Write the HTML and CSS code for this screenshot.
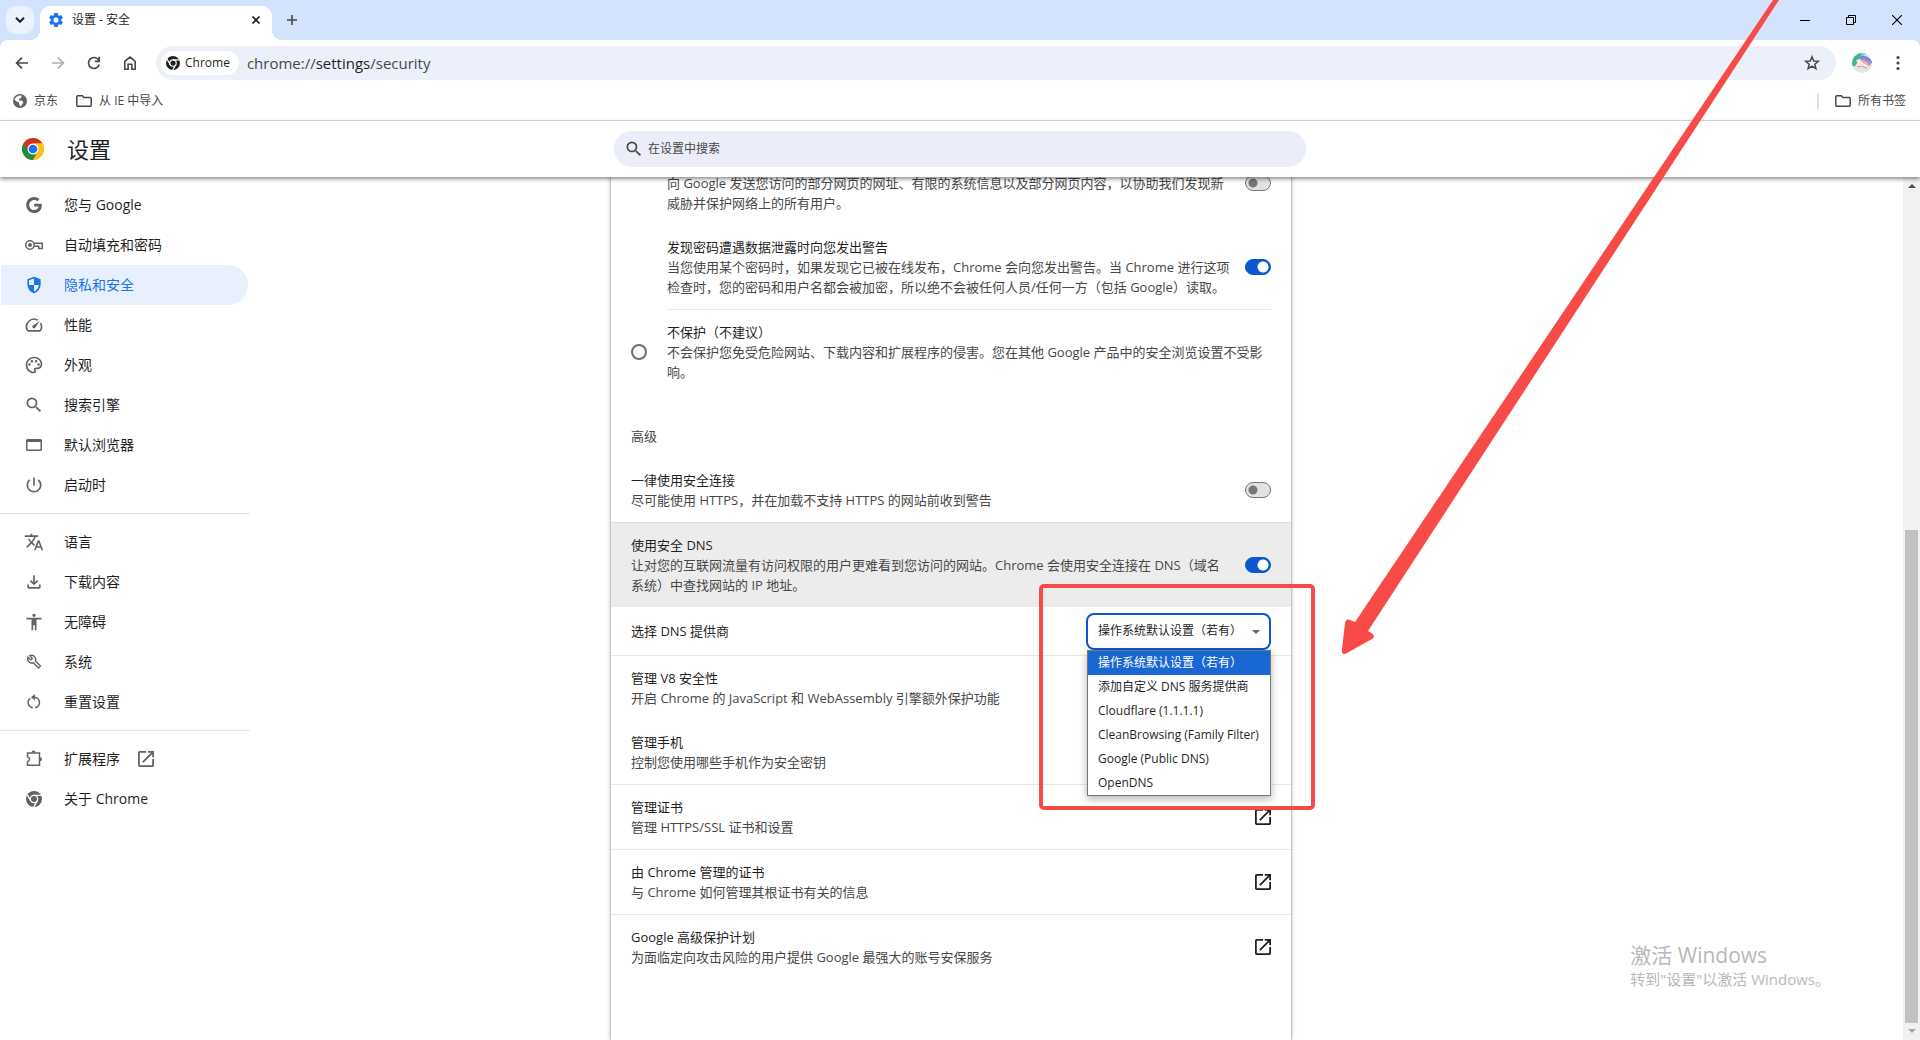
FILE: index.html
```html
<!DOCTYPE html>
<html lang="zh-CN">
<head>
<meta charset="utf-8">
<title>设置 - 安全</title>
<link rel="stylesheet" href="styles.css">
</head>
<body>
<svg class="defs" aria-hidden="true">
  <symbol id="i-open" viewBox="3 3 18 18"><path d="M19 19H5V5h7V3H5a2 2 0 0 0-2 2v14a2 2 0 0 0 2 2h14c1.100 0 2-.9 2-2v-7h-2v7zM14 3v2h3.590l-9.830 9.830 1.410 1.410L19 6.410V10h2V3h-7z"/></symbol>
  <symbol id="i-chrome" viewBox="0 0 24 24"><circle cx="12" cy="12" r="12"/><g fill="none" stroke="#fff" stroke-width="2"><circle cx="12" cy="12" r="5.500"/><path d="M12 6.500h11M7.200 14.800L1.800 5.400M16.800 14.800l-5.300 9.200"/></g></symbol>
  <symbol id="i-folder" viewBox="0 0 16 12"><path d="M1.700 .8h4.600l1.600 1.800h6.400c.5 0 .9.400.9.900v6.800c0 .5-.4.900-.9.900H1.700c-.5 0-.9-.4-.9-.9V1.700c0-.5.4-.9.9-.9z" fill="none" stroke="currentColor" stroke-width="1.500"/></symbol>
  <symbol id="i-search" viewBox="0 0 24 24"><path d="M15.500 14h-.79l-.28-.27A6.470 6.470 0 0 0 16 9.500 6.500 6.500 0 1 0 9.500 16c1.610 0 3.090-.59 4.230-1.570l.27.28v.79l5 4.990L20.490 19l-4.990-5zm-6 0C7.010 14 5 11.990 5 9.500S7.010 5 9.500 5 14 7.010 14 9.500 11.990 14 9.500 14z"/></symbol>
</svg>

<div class="window">
  <div class="tabstrip">
    <button class="tab-search" aria-label="搜索标签页"><svg width="10" height="6" viewBox="0 0 10 6"><path d="M1 .8l4 4 4-4" fill="none" stroke="currentColor" stroke-width="2"/></svg></button>
    <div class="tab">
      <svg class="gear" width="16" height="16" viewBox="1 1 22 22"><path d="M19.140 12.940c.04-.3.060-.61.060-.94 0-.32-.02-.64-.07-.94l2.030-1.580a.49.490 0 0 0 .12-.61l-1.920-3.320a.488.488 0 0 0-.59-.22l-2.390.96c-.5-.38-1.030-.7-1.620-.94l-.36-2.540a.484.484 0 0 0-.48-.41h-3.840c-.24 0-.43.170-.47.410l-.36 2.540c-.59.240-1.130.570-1.620.940l-2.390-.96c-.22-.08-.47 0-.59.220L2.740 8.870c-.12.210-.08.470.120.610l2.030 1.580c-.05.300-.09.630-.09.940s.02.640.070.940l-2.030 1.580a.49.490 0 0 0-.12.610l1.920 3.320c.12.220.370.290.590.220l2.390-.96c.5.380 1.030.700 1.620.940l.36 2.540c.05.240.240.410.480.410h3.840c.24 0 .44-.17.470-.41l.36-2.540c.59-.24 1.130-.56 1.620-.94l2.390.96c.22.080.470 0 .59-.22l1.920-3.320c.12-.22.070-.47-.12-.61l-2.010-1.580zM12 15.600A3.600 3.600 0 1 1 12 8.400a3.600 3.600 0 0 1 0 7.200z"/></svg>
      <span class="tab-title">设置 - 安全</span>
      <button class="tab-close" aria-label="关闭标签页"><svg width="8" height="8" viewBox="0 0 8 8"><path d="M.5.5l7 7M7.500.5l-7 7" stroke="currentColor" stroke-width="1.600"/></svg></button>
    </div>
    <button class="new-tab" aria-label="新标签页"><svg width="10" height="10" viewBox="0 0 10 10"><path d="M5 0v10M0 5h10" stroke="currentColor" stroke-width="1.600"/></svg></button>
    <div class="win-controls">
      <button aria-label="最小化"><svg width="10" height="10" viewBox="0 0 10 10"><path d="M0 5.500h10" stroke="currentColor"/></svg></button>
      <button aria-label="还原"><svg width="10" height="10" viewBox="0 0 10 10"><path d="M.5 2.500h7v7h-7zM2.500 2.500v-2h7v7h-2" fill="none" stroke="currentColor"/></svg></button>
      <button aria-label="关闭"><svg width="10" height="10" viewBox="0 0 10 10"><path d="M0 0l10 10M10 0L0 10" stroke="currentColor" stroke-width="1.200"/></svg></button>
    </div>
  </div>

  <div class="toolbar">
    <button class="tool" aria-label="后退"><svg width="18" height="18" viewBox="0 0 18 18"><path d="M15 9H4M9 3.600L3.600 9 9 14.400" fill="none" stroke="currentColor" stroke-width="1.700"/></svg></button>
    <button class="tool" aria-label="前进" disabled><svg width="18" height="18" viewBox="0 0 18 18"><path d="M3 9h11M9 3.600L14.400 9 9 14.400" fill="none" stroke="currentColor" stroke-width="1.700"/></svg></button>
    <button class="tool" aria-label="重新加载"><svg width="18" height="18" viewBox="0 0 18 18"><path d="M14.300 10.500A5.500 5.500 0 1 1 13.500 5.800L14 6.500" fill="none" stroke="currentColor" stroke-width="1.700"/><path d="M14.200 2.800v4.500H9.800" fill="none" stroke="currentColor" stroke-width="1.700"/></svg></button>
    <button class="tool" aria-label="主页"><svg width="18" height="18" viewBox="0 0 18 18"><path d="M3.800 15.200V7.300L9 3.100l5.200 4.200v7.900h-3.300v-5H7.100v5z" fill="none" stroke="currentColor" stroke-width="1.600"/></svg></button>
    <div class="omnibox">
      <button class="chip"><svg width="14" height="14"><use href="#i-chrome"/></svg>Chrome</button>
      <span class="url">chrome://<b>settings</b>/security</span>
      <button class="star" aria-label="为此标签页添加书签"><svg width="18" height="18" viewBox="0 0 18 18"><path d="M9 2.800l1.700 4.200 4.600.3-3.500 2.900 1.100 4.400L9 12.200l-3.900 2.400 1.100-4.400-3.500-2.900 4.600-.3z" fill="none" stroke="currentColor" stroke-width="1.500"/></svg></button>
    </div>
    <button class="avatar" aria-label="个人资料"><svg width="20" height="20" viewBox="0 0 20 20"><clipPath id="av"><circle cx="10" cy="10" r="10"/></clipPath><g clip-path="url(#av)"><path fill="#e4e4e4" d="M0 0h20v20H0z"/><path fill="#3fb593" d="M0 0h12L8 6 3 13H0z"/><path fill="#7ed3cc" d="M10 0h5L6 8z"/><g fill="none" stroke-width="2.400"><path d="M8 5c3-2 8-1 12 5" stroke="#6f86dd"/><path d="M8 7c4-2 7 0 10 5" stroke="#9c85d6"/><path d="M9 9c3-1 6 1 8 4" stroke="#e8a9bd"/></g><path fill="#f4ead6" d="M4 7l4-1 3 4 5 3-1 2-6-1-5 1 2-4z"/><path fill="none" stroke="#a9a9a9" d="M5 14l4-1 6 2"/></g></svg></button>
    <button class="menu" aria-label="菜单"><svg width="4" height="16" viewBox="0 0 4 16"><circle cx="2" cy="2.500" r="1.600"/><circle cx="2" cy="8" r="1.600"/><circle cx="2" cy="13.500" r="1.600"/></svg></button>
  </div>

  <nav class="bookmarks" aria-label="书签">
    <a href="#jd"><svg width="14" height="14" viewBox="0 0 14 14"><circle cx="7" cy="7" r="7" fill="#5f6368"/><path d="M1.300 5.500l2.700 2.300 2 .4v2l1.500 2.400L9.500 10l.8-2-1.800-1.400H6V5l2.200-1.200L8.600 1.500 5 1.700 3 3.200z" fill="#fff"/></svg>京东</a>
    <a href="#ie"><svg width="16" height="12"><use href="#i-folder"/></svg>从 IE 中导入</a>
    <a class="all" href="#all"><svg width="16" height="12"><use href="#i-folder"/></svg>所有书签</a>
  </nav>

  <header class="header">
    <div class="brand">
      <svg width="22" height="22" viewBox="0 0 48 48"><circle cx="24" cy="24" r="24" fill="#fbc116"/><path d="M24 24L3.200 12A24 24 0 0 0 24 48l10.400-18z" fill="#1e8e3e"/><path d="M24 12h20.800A24 24 0 0 0 3.200 12l10.400 18z" fill="#d93025"/><path d="M24 48a24 24 0 0 0 20.800-36H24l10.400 18z" fill="#fbc116"/><circle cx="24" cy="24" r="12" fill="#fff"/><circle cx="24" cy="24" r="9.500" fill="#1a73e8"/></svg>
      <h1>设置</h1>
    </div>
    <label class="search"><svg width="20" height="20"><use href="#i-search"/></svg><input type="search" placeholder="在设置中搜索" aria-label="在设置中搜索"></label>
  </header>

  <div class="content">
    <nav class="sidebar" aria-label="设置">
      <a href="#people"><svg width="20" height="20" viewBox="-3 -3 30 30"><path d="M12.240 10.285V14.400h6.806c-.275 1.765-2.056 5.174-6.806 5.174-4.095 0-7.439-3.389-7.439-7.574s3.345-7.574 7.439-7.574c2.330 0 3.891.989 4.785 1.849l3.254-3.138C18.189 1.186 15.479 0 12.240 0c-6.635 0-12 5.365-12 12s5.365 12 12 12c6.926 0 11.520-4.869 11.520-11.726 0-.788-.085-1.390-.189-1.989H12.240z"/></svg><span>您与 <b>Google</b></span></a>
      <a href="#autofill"><svg width="20" height="20" viewBox="0 0 20 20"><g fill="none" stroke="currentColor" stroke-width="1.500"><circle cx="6" cy="10" r="4.200"/><path d="M10 8.200h8.300v5.200h-3.500v-2.200H10"/></g><circle cx="6" cy="10" r="2"/></svg>自动填充和密码</a>
      <a class="selected" href="#privacy"><svg width="20" height="20" viewBox="0 -960 960 960"><path d="M480-80q-139-35-229.500-159.500T160-516v-244l320-120 320 120v244q0 152-90.500 276.500T480-80Zm0-84q97-30 162-118.500T718-480H480v-315l-240 90v207q0 7 2 18h238v316Z"/></svg>隐私和安全</a>
      <a href="#performance"><svg width="20" height="20" viewBox="0 0 24 24"><path d="M20.380 8.570l-1.230 1.850a8 8 0 0 1-.22 7.580H5.070A8 8 0 0 1 15.580 6.850l1.850-1.230A10 10 0 0 0 3.350 19a2 2 0 0 0 1.720 1h13.850a2 2 0 0 0 1.740-1 10 10 0 0 0-.27-10.440zm-9.790 6.840a2 2 0 0 0 2.830 0l5.660-8.490-8.490 5.660a2 2 0 0 0 0 2.830z"/></svg>性能</a>
      <a href="#appearance"><svg width="20" height="20" viewBox="0 0 24 24"><path d="M12 22C6.490 22 2 17.510 2 12S6.490 2 12 2s10 4.040 10 9c0 3.310-2.690 6-6 6h-1.770c-.28 0-.5.220-.5.500 0 .12.050.230.130.330.410.470.640 1.060.640 1.670A2.500 2.500 0 0 1 12 22zm0-18c-4.410 0-8 3.590-8 8s3.590 8 8 8c.28 0 .5-.22.500-.5a.540.540 0 0 0-.14-.35c-.41-.46-.63-1.050-.63-1.650a2.500 2.500 0 0 1 2.500-2.500H16c2.210 0 4-1.790 4-4 0-3.860-3.590-7-8-7z"/><circle cx="6.500" cy="11.500" r="1.500"/><circle cx="9.500" cy="7.500" r="1.500"/><circle cx="14.500" cy="7.500" r="1.500"/><circle cx="17.500" cy="11.500" r="1.500"/></svg>外观</a>
      <a href="#search"><svg width="20" height="20"><use href="#i-search"/></svg>搜索引擎</a>
      <a href="#default"><svg width="20" height="20" viewBox="0 0 20 20"><path d="M3.500 4h13A1.500 1.500 0 0 1 18 5.500v9a1.500 1.500 0 0 1-1.500 1.500h-13A1.500 1.500 0 0 1 2 14.500v-9A1.500 1.500 0 0 1 3.500 4zm0 3v7.500h13V7z" fill-rule="evenodd"/></svg>默认浏览器</a>
      <a href="#startup"><svg width="20" height="20" viewBox="0 0 24 24"><path d="M13 3h-2v10h2V3zm4.830 2.170l-1.420 1.420A6.920 6.920 0 0 1 19 12a7 7 0 1 1-11.420-5.420L6.170 5.170A8.930 8.930 0 0 0 3 12a9 9 0 1 0 14.830-6.830z"/></svg>启动时</a>
      <hr>
      <a href="#languages"><svg width="20" height="20" viewBox="0 0 24 24"><path d="M12.870 15.070l-2.540-2.510.03-.03A17.520 17.520 0 0 0 14.070 6H17V4h-7V2H8v2H1v2h11.170C11.500 7.920 10.440 9.750 9 11.350 8.070 10.320 7.300 9.190 6.690 8h-2c.73 1.630 1.730 3.170 2.980 4.560l-5.090 5.020L4 19l5-5 3.110 3.110.76-2.040zM18.500 10h-2L12 22h2l1.120-3h4.750L21 22h2l-4.500-12zm-2.620 7l1.620-4.330L19.120 17h-3.240z"/></svg>语言</a>
      <a href="#downloads"><svg width="20" height="20" viewBox="0 0 24 24"><path d="M12 16l-5-5 1.400-1.450 2.600 2.600V4h2v8.150l2.600-2.600L17 11l-5 5zm-6 4a2 2 0 0 1-2-2v-3h2v3h12v-3h2v3a2 2 0 0 1-2 2z"/></svg>下载内容</a>
      <a href="#a11y"><svg width="20" height="20" viewBox="0 0 24 24"><path d="M12 2a2 2 0 1 1 0 4 2 2 0 0 1 0-4zm9 7h-6v13h-2v-6h-2v6H9V9H3V7h18v2z"/></svg>无障碍</a>
      <a href="#system"><svg width="20" height="20" viewBox="0 0 20 20"><path d="M4 5.200l2.800 2.700 1.600-1.500-2.700-2.800c1.800-.7 3.800-.2 5 1.200 1 1.200 1.200 2.800.7 4.200l5 5-1.900 2-5.200-5.200c-1.500.5-3.100.2-4.200-.9C3.700 8.600 3.400 6.800 4 5.200z" fill="none" stroke="currentColor" stroke-width="1.400"/></svg>系统</a>
      <a href="#reset"><svg width="20" height="20" viewBox="0 0 20 20"><path d="M6.300 6.300a5.300 5.300 0 0 0 2.500 9.500M11.200 15.800A5.300 5.300 0 0 0 10 5.300H8.500" fill="none" stroke="currentColor" stroke-width="1.500"/><path d="M10.800 2v6.600L7 5.300z"/></svg>重置设置</a>
      <hr>
      <a href="#extensions"><svg width="20" height="20" viewBox="0 0 20 20"><path d="M3.500 4h12v12.300h-12v-3.700c2.600-.6 2.600-4.300 0-4.900z" fill="none" stroke="currentColor" stroke-width="1.500"/><path d="M7.500 3.500a2 2 0 0 1 4 0zM16 8.200a2 2 0 0 1 0 4z"/></svg>扩展程序<svg class="ext" width="16" height="16"><use href="#i-open"/></svg></a>
      <a href="#about"><svg class="small" width="16" height="16"><use href="#i-chrome"/></svg><span>关于 <b>Chrome</b></span></a>
    </nav>

    <main class="main">
      <section class="card">
        <div class="row inset first">
          <p class="desc">向 Google 发送您访问的部分网页的网址、有限的系统信息以及部分网页内容，以协助我们发现新<br>威胁并保护网络上的所有用户。</p>
          <input class="switch" type="checkbox" role="switch" aria-label="帮助改进安全功能">
        </div>
        <div class="row inset">
          <label class="text" for="leak"><span>发现密码遭遇数据泄露时向您发出警告</span><small>当您使用某个密码时，如果发现它已被在线发布，Chrome 会向您发出警告。当 Chrome 进行这项<br>检查时，您的密码和用户名都会被加密，所以绝不会被任何人员/任何一方（包括 Google）读取。</small></label>
          <input class="switch" id="leak" type="checkbox" role="switch" checked>
        </div>
        <div class="row option">
          <input class="radio" id="none" type="radio" name="level">
          <label class="text" for="none"><span>不保护（不建议）</span><small>不会保护您免受危险网站、下载内容和扩展程序的侵害。您在其他 Google 产品中的安全浏览设置不受影<br>响。</small></label>
        </div>
        <h2>高级</h2>
        <div class="row">
          <label class="text" for="https"><span>一律使用安全连接</span><small>尽可能使用 HTTPS，并在加载不支持 HTTPS 的网站前收到警告</small></label>
          <input class="switch" id="https" type="checkbox" role="switch">
        </div>
        <div class="row line highlight">
          <label class="text" for="dns"><span>使用安全 DNS</span><small>让对您的互联网流量有访问权限的用户更难看到您访问的网站。Chrome 会使用安全连接在 DNS（域名<br>系统）中查找网站的 IP 地址。</small></label>
          <input class="switch" id="dns" type="checkbox" role="switch" checked>
        </div>
        <div class="row provider">
          <label class="text" for="provider">选择 DNS 提供商</label>
          <div class="picker">
            <select id="provider"><option>操作系统默认设置（若有）</option></select>
            <ul class="options" role="listbox" aria-label="DNS 提供商">
              <li role="option" aria-selected="true">操作系统默认设置（若有）</li>
              <li role="option">添加自定义 DNS 服务提供商</li>
              <li role="option">Cloudflare (1.1.1.1)</li>
              <li role="option">CleanBrowsing (Family Filter)</li>
              <li role="option">Google (Public DNS)</li>
              <li role="option">OpenDNS</li>
            </ul>
          </div>
          <div class="frame"></div>
        </div>
        <a class="row line" href="#v8"><span class="text"><span>管理 V8 安全性</span><small>开启 Chrome 的 JavaScript 和 WebAssembly 引擎额外保护功能</small></span></a>
        <a class="row" href="#phones"><span class="text"><span>管理手机</span><small>控制您使用哪些手机作为安全密钥</small></span></a>
        <a class="row line" href="#certs"><span class="text"><span>管理证书</span><small>管理 HTTPS/SSL 证书和设置</small></span><svg width="16" height="16"><use href="#i-open"/></svg></a>
        <a class="row line" href="#root"><span class="text"><span>由 Chrome 管理的证书</span><small>与 Chrome 如何管理其根证书有关的信息</small></span><svg width="16" height="16"><use href="#i-open"/></svg></a>
        <a class="row line" href="#advanced"><span class="text"><span>Google 高级保护计划</span><small>为面临定向攻击风险的用户提供 Google 最强大的账号安保服务</small></span><svg width="16" height="16"><use href="#i-open"/></svg></a>
      </section>
    </main>

    <div class="scrollbar" aria-hidden="true">
      <svg width="8" height="4" viewBox="0 0 8 4"><path d="M0 4l4-4 4 4z" fill="#505050"/></svg>
      <div class="thumb"></div>
      <svg width="8" height="4" viewBox="0 0 8 4"><path d="M0 0l4 4 4-4z" fill="#a3a3a3"/></svg>
    </div>
  </div>
</div>

<div class="watermark"><strong>激活 Windows</strong><span>转到"设置"以激活 Windows。</span></div>
<svg class="arrow" width="460" height="660" viewBox="1330 0 460 660" aria-hidden="true"><path d="M1773 0h6L1368 631l4 2.500q4 3 0 5.500L1347 653q-6 3-5-4l3-26q1-5 5-3l5 2z" fill="#f74b47"/></svg>
</body>
</html>
```
FILE: styles.css
```css
* { box-sizing: border-box; }

body {
  margin: 0;
  background: #fff;
  color: #1f1f1f;
  font: 13px/20px "Open Sans", "Noto Sans CJK SC", sans-serif;
  overflow: hidden;
}

button, input, select { font: inherit; color: inherit; }
button { display: flex; align-items: center; justify-content: center; padding: 0; border: 0; background: none; }
a { color: inherit; text-decoration: none; }
svg { flex: none; fill: currentColor; }
.defs { position: absolute; width: 0; height: 0; }

.window { display: flex; flex-direction: column; height: 100vh; }

/* Tab strip */
.tabstrip { z-index: 1; display: flex; align-items: center; height: 40px; padding-left: 6px; background: #d3e3fd; }
.tab-search { width: 28px; height: 28px; border-radius: 10px; background: #ebf2fe; }
.tab {
  position: relative;
  display: flex;
  align-items: center;
  align-self: flex-end;
  gap: 8px;
  width: 232px;
  height: 34px;
  margin-left: 6px;
  padding: 0 10px 6px 8px;
  border-radius: 10px 10px 0 0;
  background: #fff;
  font-size: 12px;
}
.tab::before, .tab::after { content: ""; position: absolute; bottom: 0; width: 10px; height: 10px; }
.tab::before { right: 100%; background: radial-gradient(circle at 0 0, transparent 10px, #fff 10px); }
.tab::after { left: 100%; background: radial-gradient(circle at 100% 0, transparent 10px, #fff 10px); }
.gear { color: #1a73e8; }
.tab-title { flex: 1; }
.tab-close { width: 12px; height: 12px; }
.new-tab { width: 28px; height: 28px; margin-left: 6px; color: #474747; }
.win-controls { display: flex; margin-left: auto; color: #000; }
.win-controls button { width: 46px; height: 40px; }

/* Toolbar */
.toolbar { display: flex; align-items: center; height: 46px; padding: 0 6px 0 4px; border-radius: 8px 8px 0 0; background: #fff; box-shadow: 0 -8px 0 #d3e3fd; color: #474747; }
.tool { width: 36px; height: 34px; }
.tool:disabled { color: #b0b0b0; }
.omnibox { display: flex; flex: 1; align-items: center; height: 34px; margin-left: 8px; padding: 0 15px 0 5px; border-radius: 17px; background: #ebf0fa; }
.chip { gap: 5px; height: 24px; padding: 0 9px 0 5px; border-radius: 12px; background: #fff; color: #1f1f1f; font-size: 12px; }
.url { flex: 1; padding-left: 8px; font-size: 15px; }
.url b { font-weight: 400; color: #1f1f1f; }
.avatar { margin-left: 16px; }
.menu { width: 32px; height: 32px; margin-left: 10px; }

/* Bookmarks bar */
.bookmarks { display: flex; align-items: center; gap: 18px; height: 35px; padding: 0 14px 5px 13px; border-bottom: 1px solid #dcdcdc; font-size: 12px; color: #474747; }
.bookmarks a { display: flex; align-items: center; gap: 7px; }
.bookmarks .all { margin-left: auto; }
.bookmarks .all::before { content: ""; width: 2px; height: 16px; margin-right: 9px; background: #d3e3fd; }

/* Settings header */
.header { position: relative; z-index: 2; display: grid; grid-template-columns: 1fr 692px 1fr; align-items: center; height: 56px; background: #fff; box-shadow: 0 2px 4px rgba(0, 0, 0, .45); }
.brand { display: flex; align-items: center; gap: 23px; padding-left: 22px; }
h1 { margin: 0; font-size: 22px; line-height: 28px; font-weight: 400; }
.search { display: flex; align-items: center; gap: 4px; height: 36px; padding: 0 16px 0 10px; border-radius: 18px; background: #ebeef8; color: #474747; font-size: 12px; }
.search input { flex: 1; padding: 0; border: 0; outline: 0; background: none; }
.search input::placeholder { color: #474747; }

/* Body */
.content { display: flex; flex: 1; min-height: 0; }
.sidebar { width: 250px; padding-top: 8px; font-size: 14px; overflow: hidden; }
.sidebar a { display: flex; align-items: center; gap: 20px; height: 40px; margin: 0 2px 0 1px; padding-left: 23px; border-radius: 0 20px 20px 0; }
.sidebar b { font-weight: 500; }
.sidebar svg { color: #5f6368; }
.sidebar .small { margin: 0 2px; }
.sidebar .selected, .sidebar .selected svg { color: #1a73e8; }
.sidebar .selected { background: #e8f0fe; }
.sidebar hr { height: 1px; margin: 8px 0; border: 0; background: #e4e4e4; }
.sidebar .ext { margin-left: -2px; }

.main { flex: 1; padding-right: 251px; }
.card { width: 680px; height: calc(100% + 4px); margin: -4px auto 0; box-shadow: 0 0 2px rgba(0, 0, 0, .4), 0 1px 5px rgba(0, 0, 0, .25); }
.row { display: flex; align-items: center; gap: 20px; padding: 12px 20px; }
.text { flex: 1; min-width: 0; }
.text span, .text small { display: block; }
.text small, .desc { font-size: 13px; color: #474747; white-space: nowrap; }
.line { border-top: 1px solid #e6e6e6; }
.inset { gap: 12px; margin: 0 20px 0 56px; padding: 12px 0; }
.inset.first { align-items: flex-start; padding-top: 0; }
.desc { flex: 1; min-width: 0; margin: 0; }
.first .switch { margin-top: 2px; }
.option { position: relative; padding: 13px 20px 30px; }
.option::before { content: ""; position: absolute; top: 0; left: 56px; right: 20px; height: 1px; background: #e6e6e6; }
h2 { margin: 0; padding: 14px 20px 12px; font-size: 13px; font-weight: 400; color: #474747; }
.highlight { background: #ececec; border-color: #dcdcdc; }

.switch { appearance: none; flex: none; width: 26px; height: 16px; margin: 0; border: 1px solid #747775; border-radius: 8px; background: radial-gradient(circle at 7px 7px, #747775 4px, transparent 5px) #e1e3e1; }
.switch:checked { border-color: #0b57d0; background: radial-gradient(circle at 17px 7px, #fff 5px, transparent 6px) #0b57d0; }
.radio { appearance: none; flex: none; width: 16px; height: 16px; margin: 0; border: 2px solid #6e6e6e; border-radius: 50%; }

.provider { position: relative; height: 48px; padding: 0 20px; }
.picker { position: relative; font-size: 12px; }
.picker select { display: block; appearance: none; width: 185px; height: 37px; padding: 0 20px 0 10px; border: 2px solid #0b57d0; border-radius: 8px; background: #fff; }
.picker::after { content: ""; position: absolute; top: 17px; right: 11px; border: 4px solid transparent; border-top-color: #5f6368; border-bottom: 0; }
.options { position: absolute; z-index: 3; top: 37px; left: 1px; width: 184px; margin: 0; padding: 0; border: 1px solid #767676; background: #fff; box-shadow: 0 3px 8px rgba(0, 0, 0, .3); list-style: none; line-height: 24px; white-space: nowrap; }
.options li { padding: 0 10px; }
.options [aria-selected] { background: #1967d2; color: #fff; }
.frame { position: absolute; z-index: 4; top: -23px; right: -24px; width: 276px; height: 226px; border: 4px solid #f74b47; border-radius: 5px; pointer-events: none; }

.scrollbar { display: flex; flex-direction: column; align-items: center; width: 17px; padding: 7px 0; background: #f1f1f1; }
.thumb { width: 13px; height: 493px; margin: auto 0 6px; background: #c1c1c1; }

.watermark { position: absolute; right: 90px; bottom: 50px; display: flex; flex-direction: column; font-size: 15px; line-height: 22px; color: #b9b9b9; }
.watermark strong { font-size: 21px; line-height: 26px; font-weight: 400; }
.arrow { position: absolute; z-index: 5; top: 0; right: 130px; pointer-events: none; }
```
